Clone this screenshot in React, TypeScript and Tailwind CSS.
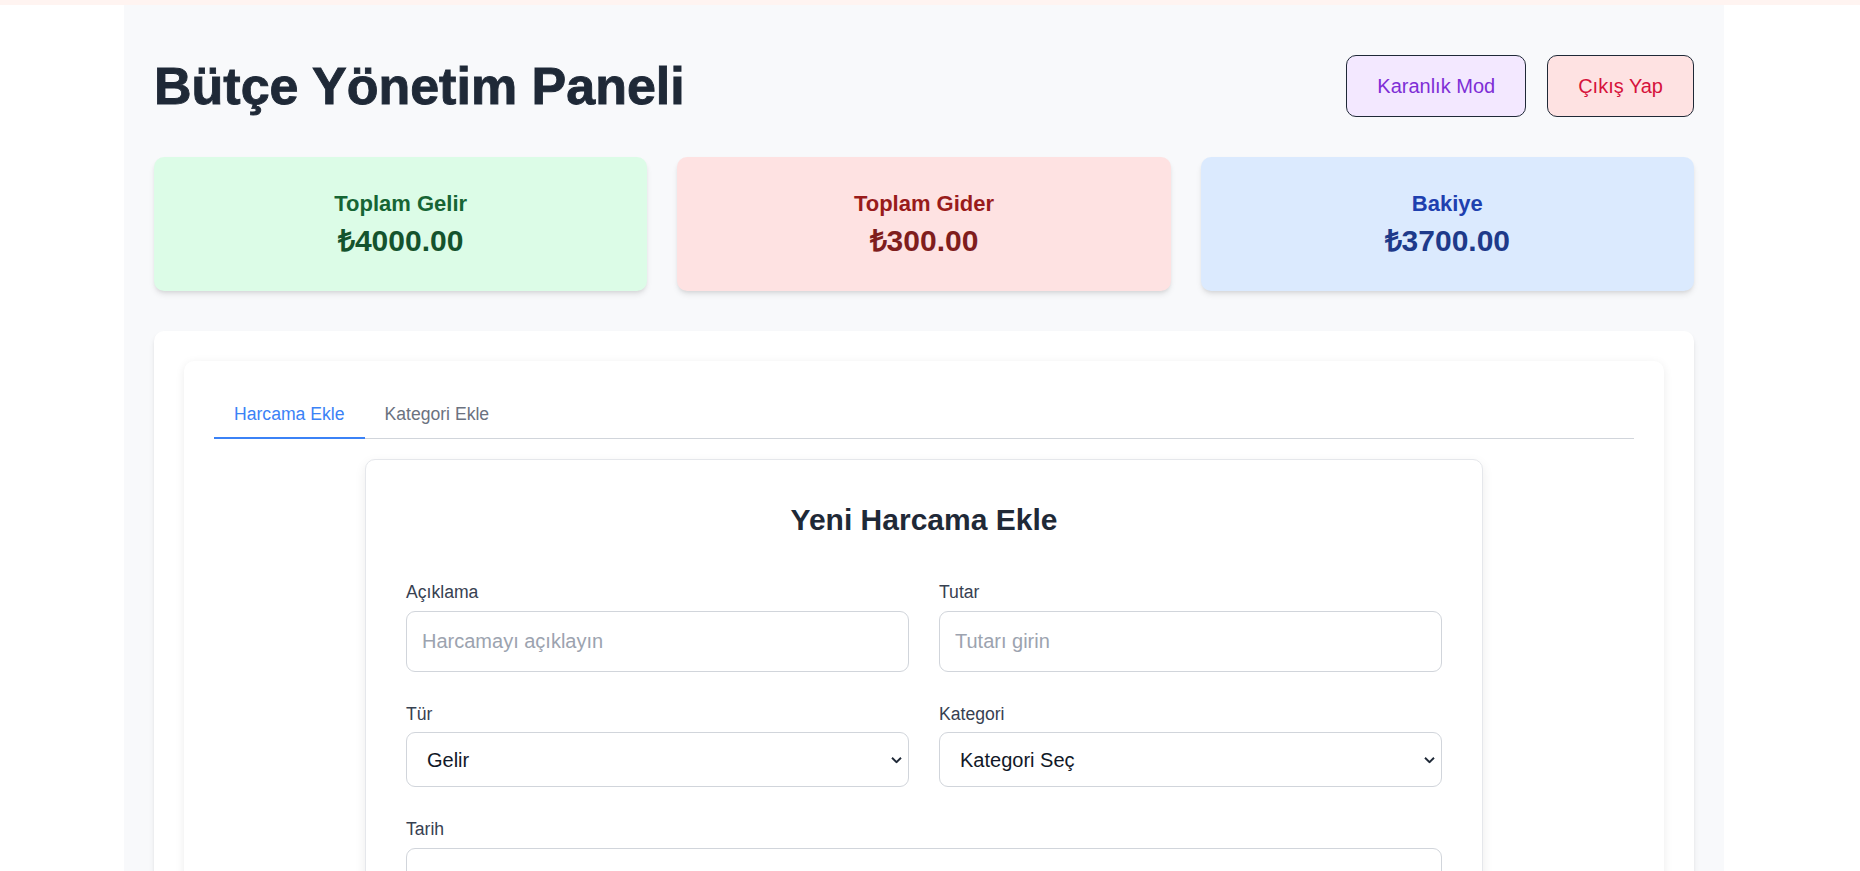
import React from "react";

function Chevron() {
  return (
    <svg
      width="11"
      height="7"
      viewBox="0 0 11 7"
      className="pointer-events-none absolute right-[7px] top-1/2 -translate-y-1/2"
    >
      <path d="M1 1.2 L5.5 5.6 L10 1.2" fill="none" stroke="#1f2937" strokeWidth="1.9" />
    </svg>
  );
}

function Field({ label, children }: { label: string; children: React.ReactNode }) {
  return (
    <div className="flex flex-col">
      <label className="mb-[5px] text-[17.6px] leading-[26.4px] text-[#374151]">{label}</label>
      {children}
    </div>
  );
}

function StatCard({
  title,
  value,
  bg,
  titleColor,
  valueColor,
}: {
  title: string;
  value: string;
  bg: string;
  titleColor: string;
  valueColor: string;
}) {
  return (
    <div className={`flex flex-col items-center rounded-[10px] p-8 shadow-md ${bg}`}>
      <div className={`text-[22px] font-bold leading-[30px] ${titleColor}`}>{title}</div>
      <div className={`mt-1 text-[30px] font-bold leading-[36px] ${valueColor}`}>{value}</div>
    </div>
  );
}

export default function App() {
  const inputCls =
    "h-[61px] w-full rounded-[9px] border border-[#d1d5db] bg-white px-[15px] text-[20px] text-[#111827] placeholder:text-[#9ca3af] outline-none";
  const selectCls =
    "h-[55px] w-full appearance-none rounded-[9px] border border-[#d1d5db] bg-white pl-[20px] pr-[30px] text-[20px] text-[#111827] outline-none";

  return (
    <div className="min-h-screen bg-white font-['Liberation_Sans',Arial,sans-serif]">
      <div className="h-[5px] w-full bg-[#fff4f1]" />
      <div className="ml-[124px] w-[1600px] bg-[#f8f9fb] px-[30px] pt-[50px] pb-[60px]">
        {/* Header */}
        <div className="flex items-center justify-between">
          <h1 className="text-[52px] font-bold leading-none text-[#1f2937] [-webkit-text-stroke:0.9px_#1f2937]">
            Bütçe Yönetim Paneli
          </h1>
          <div className="flex gap-[21px]">
            <button className="rounded-[10px] border border-[#1f2937] bg-[#f3e8ff] px-[30px] py-[15px] text-[20px] leading-[30px] text-[#7e2ed6]">
              Karanlık Mod
            </button>
            <button className="rounded-[10px] border border-[#1f2937] bg-[#fee2e2] px-[30px] py-[15px] text-[20px] leading-[30px] text-[#d6133c]">
              Çıkış Yap
            </button>
          </div>
        </div>

        {/* Stat cards */}
        <div className="mt-[40px] grid grid-cols-3 gap-[30px]">
          <StatCard
            title="Toplam Gelir"
            value="₺4000.00"
            bg="bg-[#dcfce7]"
            titleColor="text-[#166534]"
            valueColor="text-[#14532d]"
          />
          <StatCard
            title="Toplam Gider"
            value="₺300.00"
            bg="bg-[#fee2e2]"
            titleColor="text-[#991b1b]"
            valueColor="text-[#7f1d1d]"
          />
          <StatCard
            title="Bakiye"
            value="₺3700.00"
            bg="bg-[#dbeafe]"
            titleColor="text-[#1e40af]"
            valueColor="text-[#1e3a8a]"
          />
        </div>

        {/* Main panel */}
        <div className="mt-[40px] rounded-[10px] bg-white p-[30px] shadow-md">
          <div className="rounded-[10px] bg-white p-[30px] shadow-[0_2px_10px_rgba(0,0,0,0.08)]">
            {/* Tabs */}
            <div className="flex border-b border-[#d1d5db]">
              <button className="-mb-px border-b-2 border-[#3b82f6] px-5 py-[10px] text-[17.6px] leading-[26.4px] text-[#3b82f6]">
                Harcama Ekle
              </button>
              <button className="-mb-px border-b-2 border-transparent px-5 py-[10px] text-[17.6px] leading-[26.4px] text-[#6b7280]">
                Kategori Ekle
              </button>
            </div>

            {/* Form card */}
            <div className="mx-auto mt-[20px] w-[1118px] rounded-[10px] border border-[#e5e7eb] bg-white p-10 shadow-[0_4px_12px_rgba(0,0,0,0.08)]">
              <h2 className="mb-[40px] text-center text-[30px] font-bold leading-[39px] text-[#1f2937]">
                Yeni Harcama Ekle
              </h2>
              <div className="grid grid-cols-2 gap-x-[30px] gap-y-[29px]">
                <Field label="Açıklama">
                  <input className={inputCls} placeholder="Harcamayı açıklayın" />
                </Field>
                <Field label="Tutar">
                  <input className={inputCls} placeholder="Tutarı girin" />
                </Field>
                <Field label="Tür">
                  <div className="relative">
                    <select className={selectCls} defaultValue="Gelir">
                      <option>Gelir</option>
                      <option>Gider</option>
                    </select>
                    <Chevron />
                  </div>
                </Field>
                <Field label="Kategori">
                  <div className="relative">
                    <select className={selectCls} defaultValue="">
                      <option value="">Kategori Seç</option>
                    </select>
                    <Chevron />
                  </div>
                </Field>
                <div className="col-span-2">
                  <Field label="Tarih">
                    <input className={inputCls} type="text" />
                  </Field>
                </div>
              </div>
              <button className="mt-[29px] h-[55px] w-full rounded-[9px] bg-[#3b82f6] text-[20px] text-white">
                Ekle
              </button>
            </div>
          </div>
        </div>
      </div>
    </div>
  );
}
